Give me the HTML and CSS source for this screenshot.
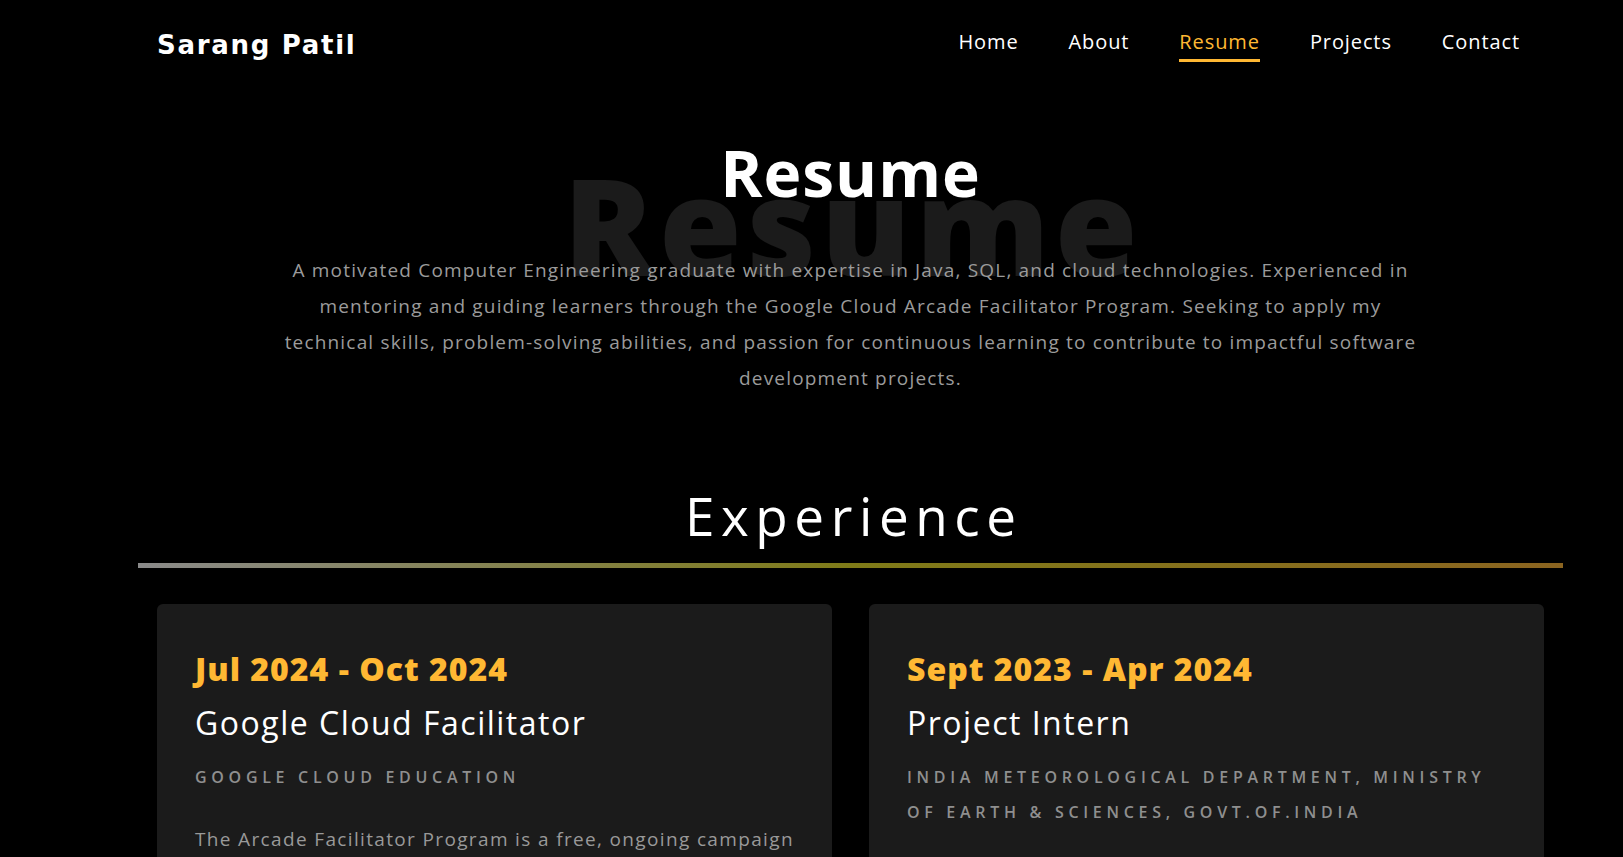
FILE: index.html
```html
<!DOCTYPE html>
<html lang="en">
<head>
<meta charset="utf-8">
<title>Sarang Patil - Resume</title>
<link rel="stylesheet" href="styles.css">
</head>
<body>
<header class="site-header">
  <a class="logo" href="#">Sarang Patil</a>
  <nav class="nav">
    <a class="nav-link" href="#">Home</a>
    <a class="nav-link" href="#">About</a>
    <a class="nav-link active" href="#">Resume</a>
    <a class="nav-link" href="#">Projects</a>
    <a class="nav-link" href="#">Contact</a>
  </nav>
</header>

<main class="main">
  <section class="hero">
    <div class="title-wrap">
      <span class="title-bg" aria-hidden="true">Resume</span>
      <h1 class="title">Resume</h1>
    </div>
    <p class="summary">A motivated Computer Engineering graduate with expertise in Java, SQL, and cloud technologies. Experienced in<br>mentoring and guiding learners through the Google Cloud Arcade Facilitator Program. Seeking to apply my<br>technical skills, problem-solving abilities, and passion for continuous learning to contribute to impactful software<br>development projects.</p>
  </section>

  <section class="experience">
    <h2 class="section-heading">Experience</h2>
    <div class="divider"></div>
    <div class="cards">
      <article class="card">
        <div class="date">Jul 2024 - Oct 2024</div>
        <h3 class="role">Google Cloud Facilitator</h3>
        <div class="org">Google Cloud Education</div>
        <p class="desc">The Arcade Facilitator Program is a free, ongoing campaign that helps learners build practical skills on Google Cloud through hands-on labs and challenges.</p>
      </article>
      <article class="card">
        <div class="date">Sept 2023 - Apr 2024</div>
        <h3 class="role">Project Intern</h3>
        <div class="org">India Meteorological Department, Ministry of Earth &amp; Sciences, Govt.of.India</div>
        <p class="desc">Worked on data analysis and software tools supporting weather forecasting and research projects.</p>
      </article>
    </div>
  </section>
</main>
</body>
</html>
```
FILE: styles.css
```css
* { box-sizing: border-box; }

html, body {
  margin: 0;
  padding: 0;
  background: #000;
  overflow: hidden;
}

body {
  font-family: "Open Sans", "Noto Sans", sans-serif;
  color: #fff;
}

a { text-decoration: none; color: inherit; }

/* Header */
.site-header {
  display: flex;
  justify-content: space-between;
  align-items: flex-start;
  padding: 28px 103px 0 157px;
  height: 90px;
}

.logo {
  font-family: "DejaVu Sans", sans-serif;
  font-weight: 700;
  font-size: 26px;
  line-height: 30px;
  letter-spacing: 1.7px;
  color: #fff;
  margin-top: 2px;
}

.nav {
  display: flex;
  gap: 50px;
}

.nav-link {
  font-size: 20px;
  line-height: 27px;
  letter-spacing: 0.9px;
  color: #fff;
  padding-bottom: 4px;
  border-bottom: 3px solid transparent;
}

.nav-link.active {
  color: #ffb833;
  border-bottom-color: #ffb833;
}

/* Main container */
.main {
  margin-left: 138px;
  width: 1425px;
}

.hero {
  display: flex;
  flex-direction: column;
  align-items: center;
  padding-top: 51px;
}

.title-wrap {
  position: relative;
  display: flex;
  justify-content: center;
  width: 100%;
  height: 64px;
}

.title-bg {
  position: absolute;
  top: 16px;
  left: 0;
  right: 0;
  text-align: center;
  font-weight: 800;
  font-size: 134px;
  line-height: 134px;
  letter-spacing: 5px;
  padding-left: 5px;
  color: #1b1b1b;
  white-space: nowrap;
}

.title {
  position: relative;
  margin: 0;
  font-weight: 700;
  font-size: 64px;
  line-height: 64px;
  letter-spacing: 1px;
  color: #fff;
}

.summary {
  position: relative;
  margin: 47px 0 0;
  text-align: center;
  font-size: 19px;
  line-height: 36px;
  letter-spacing: 1.18px;
  color: #9b9b9b;
  white-space: nowrap;
}

/* Experience */
.experience {
  margin-top: 89px;
}

.section-heading {
  margin: 0;
  text-align: center;
  font-weight: 400;
  font-size: 53px;
  line-height: 62px;
  letter-spacing: 6.6px;
  padding-left: 6.6px;
  color: #fff;
}

.divider {
  margin-top: 16px;
  height: 5px;
  background: linear-gradient(to right, #8a8a8a 0%, #7f7b18 50%, #8b6420 100%);
}

.cards {
  display: grid;
  grid-template-columns: 1fr 1fr;
  gap: 37px;
  padding: 0 19px;
  margin-top: 36px;
}

.card {
  background: #1b1b1b;
  border-radius: 6px;
  padding: 45px 38px 40px;
  min-height: 320px;
}

.date {
  font-weight: 800;
  font-size: 32px;
  line-height: 40px;
  letter-spacing: 1px;
  color: #ffb833;
}

.role {
  margin: 14px 0 0;
  font-weight: 400;
  font-size: 32px;
  line-height: 40px;
  letter-spacing: 1.5px;
  color: #fff;
}

.org {
  margin-top: 17px;
  font-weight: 600;
  font-size: 16px;
  line-height: 35px;
  letter-spacing: 4.7px;
  text-transform: uppercase;
  color: #8f8f8f;
}

.desc {
  margin: 26px 0 0;
  font-size: 19px;
  line-height: 36px;
  letter-spacing: 1.35px;
  color: #999;
}
```
